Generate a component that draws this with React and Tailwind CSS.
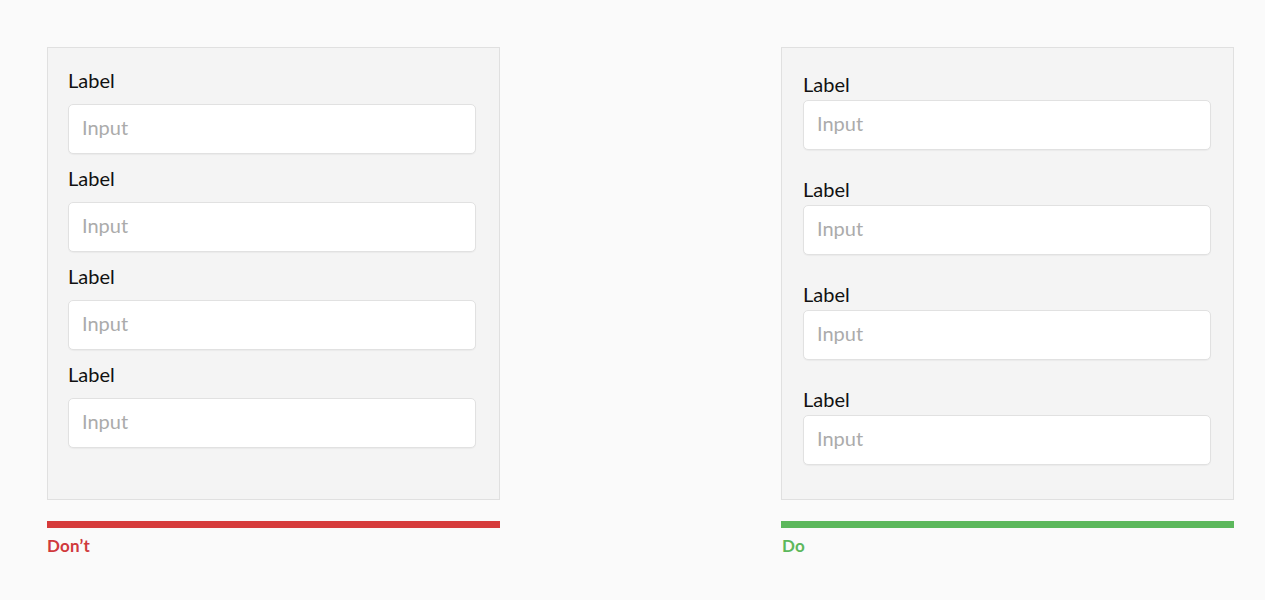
import React from 'react';

const fields = ['Label', 'Label', 'Label', 'Label'];

function Field({ label, gap }) {
  return (
    <div className={`flex flex-col ${gap}`}>
      <span className="text-[20px] leading-[24px] text-[#111]">{label}</span>
      <input
        readOnly
        placeholder="Input"
        className="h-[50px] w-[408px] rounded-[5px] border border-[#e1e1e1] bg-white px-[13px] pb-[5px] text-[20px] text-[#222] shadow-[0_1px_1px_rgba(0,0,0,0.04)] outline-none placeholder:text-[#ababab]"
      />
    </div>
  );
}

export default function App() {
  return (
    <div className="min-h-[600px] w-full bg-[#fafafa] font-['Lato','Liberation_Sans',sans-serif]">
      <div className="flex gap-[281px] pl-[47px] pt-[47px]">
        {/* Don't */}
        <div className="flex w-[453px] flex-col">
          <div className="flex h-[453px] flex-col gap-3 border border-[#e0e0e0] bg-[#f4f4f4] pl-5 pt-5">
            {fields.map((f, i) => (
              <Field key={i} label={f} gap="gap-3" />
            ))}
          </div>
          <div className="mt-[21px] h-[7px] bg-[#d63b3b]" />
          <span className="mt-[6px] text-[17px] leading-[24px] font-bold tracking-[0.2px] text-[#d0393c]">Don’t</span>
        </div>

        {/* Do */}
        <div className="flex w-[453px] flex-col">
          <div className="flex h-[453px] flex-col gap-[27px] border border-[#e0e0e0] bg-[#f4f4f4] pl-[21px] pt-6">
            {fields.map((f, i) => (
              <Field key={i} label={f} gap="gap-1" />
            ))}
          </div>
          <div className="mt-[21px] h-[7px] bg-[#5cb85c]" />
          <span className="mt-[6px] pl-px text-[17px] leading-[24px] font-bold tracking-[0.2px] text-[#5cb85c]">Do</span>
        </div>
      </div>
    </div>
  );
}
